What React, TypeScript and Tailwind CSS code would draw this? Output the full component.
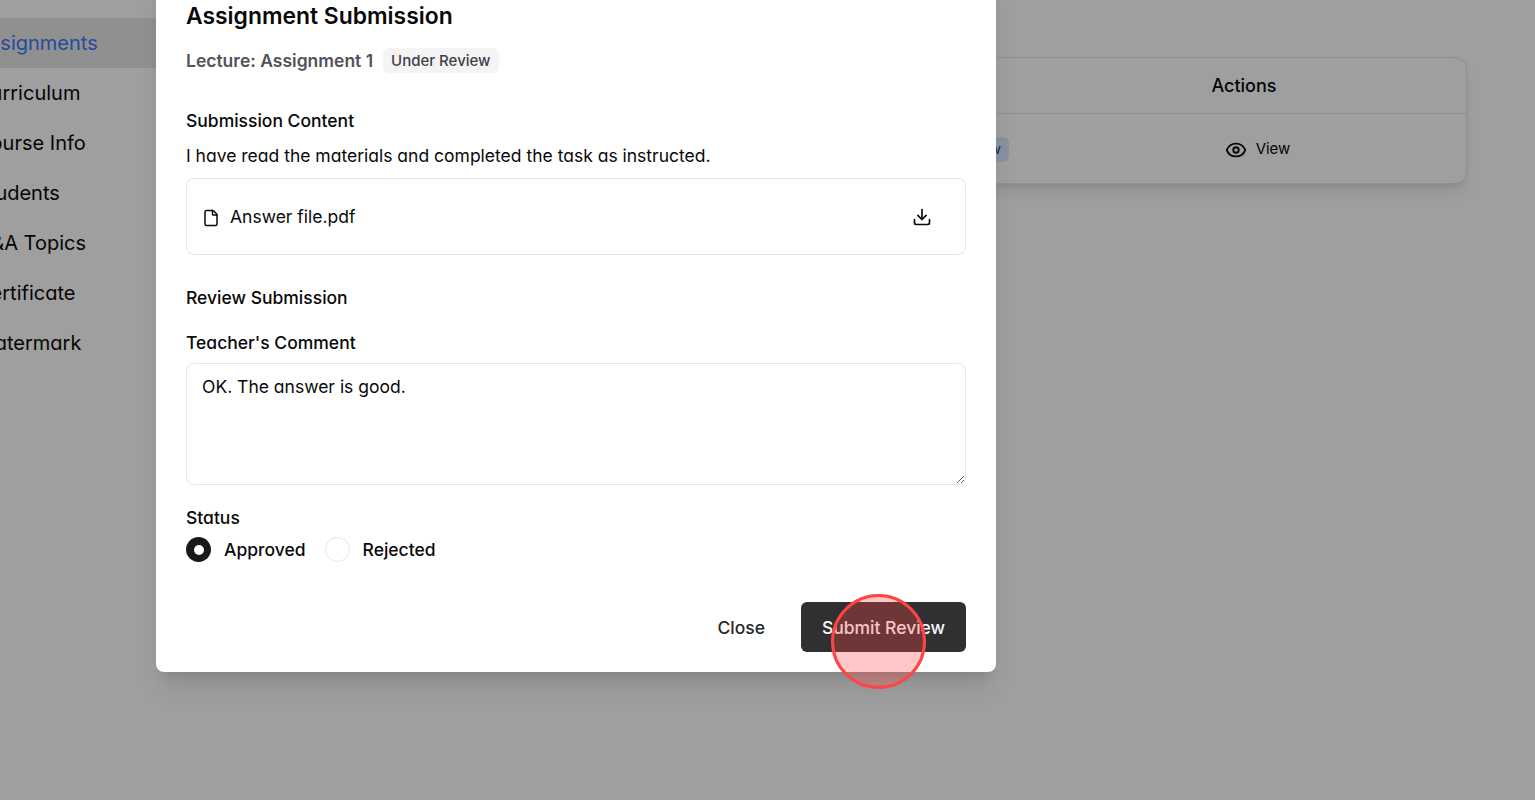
import React from "react";
import { Download, Eye, File } from "lucide-react";

const navItems = ["Assignments", "Curriculum", "Course Info", "Students", "Q&A Topics", "Certificate", "Watermark"];

const App: React.FC = () => {
  return (
    <div className="relative h-screen w-full overflow-hidden bg-white font-['Inter',sans-serif] text-[#09090b] [font-feature-settings:'cv11']">
      <div className="flex h-full">
        {/* sidebar, scrolled off to the left */}
        <aside className="flex w-[200px] shrink-0 flex-col pt-[18px]">
          {navItems.map((item, i) => (
            <div
              key={item}
              className={`flex h-[50px] items-center whitespace-nowrap text-[20px] ${
                i === 0 ? "bg-[#e7e7e7] text-[#4076ff]" : ""
              }`}
            >
              <span className="-ml-6">{item}</span>
            </div>
          ))}
        </aside>
        <main className="flex flex-1 justify-end pt-[57px] pr-[68px]">
          <div className="flex h-[127px] w-[700px] flex-col rounded-xl border border-[#e5e5e5] bg-white shadow-lg">
            <div className="flex h-[56px] justify-end border-b border-[#e5e5e5]">
              <div className="flex w-[444px] items-center justify-center text-[18px] font-medium">Actions</div>
            </div>
            <div className="flex flex-1 items-center justify-end pt-[2px]">
              <div className="mr-[13px] h-[25px] w-[40px] rounded-md bg-[#dbeafe] pt-[2px] text-right text-sm text-[#1e40af]">
                <span className="pr-2">w</span>
              </div>
              <div className="flex w-[444px] items-center justify-center gap-[9px] pl-[27px] text-[15px]">
                <Eye size={22} />
                <span>View</span>
              </div>
            </div>
          </div>
        </main>
      </div>

      {/* backdrop */}
      <div className="absolute inset-0 bg-black/[0.375]" />

      {/* dialog */}
      <div className="absolute bottom-[128px] left-[156px] flex w-[840px] flex-col rounded-lg bg-white px-[30px] pb-[20px] pt-8 shadow-xl">
        <h2 className="text-[22.88px] font-semibold leading-[28px]">Assignment Submission</h2>
        <div className="mt-[18px] flex items-start gap-[10px]">
          <span className="text-[17.5px] font-semibold leading-[26px] text-[#52525b]">Lecture: Assignment 1</span>
          <span className="rounded-md bg-[#f4f4f5] px-2 py-[2px] text-[15px] leading-[21px] font-medium text-[#3f3f46]">Under Review</span>
        </div>

        <h3 className="mt-[35px] text-[17.5px] font-medium leading-6">Submission Content</h3>
        <p className="mt-[11px] text-[17.5px] leading-6">I have read the materials and completed the task as instructed.</p>
        <div className="mt-[10px] flex h-[77px] items-center justify-between rounded-lg border border-[#e5e5e5] pl-[15px] pr-[33px]">
          <div className="flex items-center gap-[10px] pt-[2px]">
            <File size={18} />
            <span className="text-[17.5px]">Answer file.pdf</span>
          </div>
          <Download size={20} />
        </div>

        <h3 className="mt-[31px] text-[17.5px] font-medium leading-6">Review Submission</h3>
        <label className="mt-[21px] text-[17.5px] font-medium leading-6">Teacher's Comment</label>
        <textarea
          readOnly
          defaultValue="OK. The answer is good."
          className="mt-[8px] h-[122px] rounded-lg border border-[#e5e5e5] px-[15px] py-[11px] text-[17.5px] leading-6 outline-none"
        />

        <span className="mt-[21px] text-[17.5px] font-medium leading-6">Status</span>
        <div className="mt-[7px] flex items-center">
          <span className="flex size-[25px] items-center justify-center rounded-full bg-[#18181b]">
            <span className="size-[10px] rounded-full bg-white" />
          </span>
          <span className="ml-[13px] text-[17.5px] font-medium leading-6">Approved</span>
          <span className="ml-[19px] size-[25px] rounded-full border border-[#e5e5e5]" />
          <span className="ml-[13px] text-[17.5px] font-medium leading-6">Rejected</span>
        </div>

        <div className="mt-[40px] flex items-center justify-end gap-[36px]">
          <button className="pt-[2px] text-[17.5px] font-medium text-[#27272a]">Close</button>
          <button className="h-[50px] w-[165px] rounded-md bg-[#303032] pt-[2px] text-[17.5px] font-medium text-[#fafafa]">Submit Review</button>
        </div>
      </div>

      {/* click marker */}
      <div className="absolute left-[831px] top-[594px] size-[95px] rounded-full border-[3px] border-[#ff4444] bg-[#ff4444]/30" />
    </div>
  );
};

export default App;
